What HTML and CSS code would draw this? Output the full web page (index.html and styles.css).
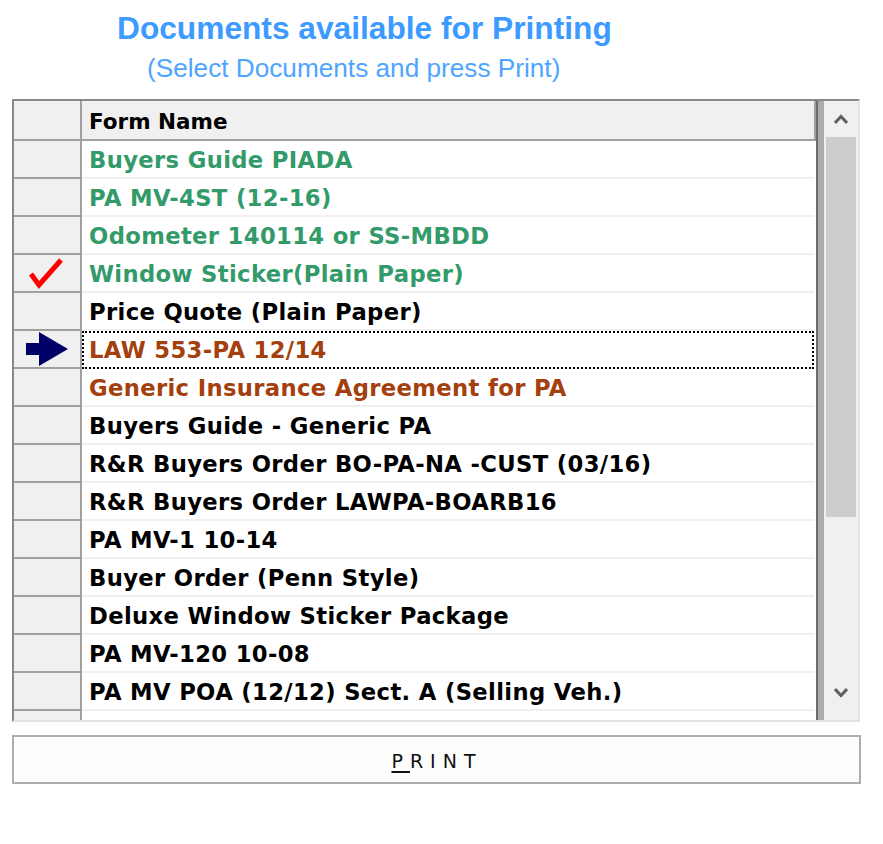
FILE: index.html
```html
<!DOCTYPE html>
<html>
<head>
<meta charset="utf-8">
<link rel="stylesheet" href="styles.css">
</head>
<body>
<div class="page">
  <h1 class="title">Documents available for Printing</h1>
  <p class="subtitle">(Select Documents and press Print)</p>

  <div class="grid">
    <div class="table">
      <div class="row head">
        <div class="ind"></div>
        <div class="cell">Form Name</div>
      </div>
      <div class="row"><div class="ind"></div><div class="cell green">Buyers Guide PIADA</div></div>
      <div class="row"><div class="ind"></div><div class="cell green">PA MV-4ST (12-16)</div></div>
      <div class="row"><div class="ind"></div><div class="cell green">Odometer 140114 or SS-MBDD</div></div>
      <div class="row"><div class="ind">
        <svg class="check" width="36" height="32" viewBox="0 0 36 32"><path d="M3 17 L11 28 L33 3" fill="none" stroke="#ff0000" stroke-width="5" stroke-linejoin="miter" stroke-linecap="butt"/></svg>
      </div><div class="cell green">Window Sticker(Plain Paper)</div></div>
      <div class="row"><div class="ind"></div><div class="cell">Price Quote (Plain Paper)</div></div>
      <div class="row"><div class="ind">
        <svg class="arrow" width="42" height="34" viewBox="0 0 42 34"><path d="M0 11 H13 V0 L42 17 L13 34 V23 H0 Z" fill="#000066"/></svg>
      </div><div class="cell brown focus">LAW 553-PA 12/14</div></div>
      <div class="row"><div class="ind"></div><div class="cell brown">Generic Insurance Agreement for PA</div></div>
      <div class="row"><div class="ind"></div><div class="cell">Buyers Guide - Generic PA</div></div>
      <div class="row"><div class="ind"></div><div class="cell">R&amp;R Buyers Order BO-PA-NA -CUST (03/16)</div></div>
      <div class="row"><div class="ind"></div><div class="cell">R&amp;R Buyers Order LAWPA-BOARB16</div></div>
      <div class="row"><div class="ind"></div><div class="cell">PA MV-1 10-14</div></div>
      <div class="row"><div class="ind"></div><div class="cell">Buyer Order (Penn Style)</div></div>
      <div class="row"><div class="ind"></div><div class="cell">Deluxe Window Sticker Package</div></div>
      <div class="row"><div class="ind"></div><div class="cell">PA MV-120 10-08</div></div>
      <div class="row"><div class="ind"></div><div class="cell">PA MV POA (12/12) Sect. A (Selling Veh.)</div></div>
      <div class="row"><div class="ind"></div><div class="cell">PA MV POA (12/12) Sect. B (Buying Veh.)</div></div>
    </div>
    <div class="vbar-dark"></div>
    <div class="vbar-light"></div>
    <div class="scrollbar">
      <div class="sb-btn">
        <svg width="14" height="10" viewBox="0 0 14 10"><path d="M1 9 L7 2.5 L13 9" fill="none" stroke="#606060" stroke-width="3"/></svg>
      </div>
      <div class="thumb"></div>
      <div class="sb-track"></div>
      <div class="sb-btn low">
        <svg width="14" height="10" viewBox="0 0 14 10"><path d="M1 1 L7 7.5 L13 1" fill="none" stroke="#606060" stroke-width="3"/></svg>
      </div>
    </div>
  </div>

  <button class="print"><u>P</u>RINT</button>
</div>
</body>
</html>
```

FILE: styles.css
```css
html, body {
  margin: 0;
  padding: 0;
  background: #ffffff;
}

.page {
  width: 883px;
  height: 844px;
  overflow: hidden;
}

.title {
  margin: 0;
  padding: 10px 0 0 117px;
  font-family: "Liberation Sans", Arial, sans-serif;
  font-weight: bold;
  font-size: 31.7px;
  line-height: 36px;
  color: #3d9bff;
}

.subtitle {
  margin: 7px 0 0 0;
  padding-left: 147px;
  font-family: "Liberation Sans", Arial, sans-serif;
  font-size: 26.2px;
  line-height: 30px;
  color: #4ea5ff;
}

.grid {
  margin: 16px 0 0 12px;
  width: 848px;
  height: 623px;
  box-sizing: border-box;
  border-top: 2px solid #888888;
  border-left: 2px solid #888888;
  border-right: 2px solid #e3e3e3;
  border-bottom: 2px solid #e3e3e3;
  display: flex;
}

.table {
  width: 802px;
  height: 619px;
  overflow: hidden;
  background: #ffffff;
}

.row {
  display: flex;
  height: 38px;
}

.row.head {
  height: 40px;
}

.ind {
  width: 68px;
  box-sizing: border-box;
  background: #f0f0f0;
  border-right: 2px solid #a0a0a0;
  border-bottom: 2px solid #a0a0a0;
  display: flex;
  align-items: center;
  justify-content: center;
  flex: none;
}

.cell {
  flex: 1;
  margin-right: 2px;
  box-sizing: border-box;
  border-bottom: 2px solid #f0f0f0;
  padding: 2px 0 0 7px;
  font-family: "DejaVu Sans", Verdana, sans-serif;
  font-weight: bold;
  font-size: 22.7px;
  letter-spacing: 0.35px;
  line-height: 34px;
  color: #000000;
  white-space: nowrap;
  overflow: hidden;
}

.head .cell {
  margin-right: 0;
  padding-top: 4px;
  background: #f0f0f0;
  border-bottom: 2px solid #a0a0a0;
  border-right: 2px solid #a0a0a0;
  font-size: 21.5px;
  letter-spacing: 0;
}

.green {
  color: #339a6a;
}

.brown {
  color: #a3400e;
}

.focus {
  outline: 2px dotted #000000;
  outline-offset: -2px;
}

.check {
  margin-left: -2px;
}

.arrow {
  margin-left: 0;
}

.vbar-dark {
  width: 2px;
  background: #6b6b6b;
  flex: none;
}

.vbar-light {
  width: 6px;
  background: #ababab;
  flex: none;
}

.scrollbar {
  width: 34px;
  background: #f0f0f0;
  display: flex;
  flex-direction: column;
  flex: none;
}

.sb-btn {
  height: 36px;
  display: flex;
  align-items: center;
  justify-content: center;
  flex: none;
}

.sb-btn.low {
  height: 32px;
  align-items: flex-start;
}

.thumb {
  margin: 0 2px;
  height: 380px;
  background: #cdcdcd;
  flex: none;
}

.sb-track {
  flex: 1;
}

.print {
  display: block;
  margin: 13px 0 0 12px;
  width: 849px;
  height: 49px;
  box-sizing: border-box;
  border: 2px solid #adadad;
  background: #fdfdfd;
  padding: 3px 0 0 1px;
  font-family: "DejaVu Sans", sans-serif;
  font-size: 19px;
  letter-spacing: 7px;
  color: #111111;
  text-align: center;
}

.print u {
  text-decoration-thickness: 2px;
  text-underline-offset: 3px;
}
```
